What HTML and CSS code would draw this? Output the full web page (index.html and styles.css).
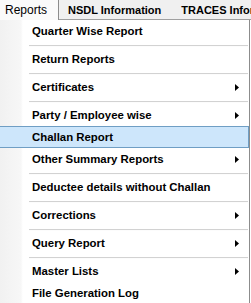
FILE: index.html
```html
<!DOCTYPE html>
<html>
<head>
<meta charset="utf-8">
<link rel="stylesheet" href="styles.css">
</head>
<body>
<div class="menubar">
  <div class="tab open">Reports</div>
  <div class="rest">
    <div class="tab first">NSDL Information</div>
    <div class="tab">TRACES Information</div>
  </div>
</div>
<div class="dropdown">
  <div class="item">Quarter Wise Report</div>
  <div class="sep"></div>
  <div class="item">Return Reports</div>
  <div class="sep"></div>
  <div class="item">Certificates<span class="arrow"><svg width="4" height="7" viewBox="0 0 4 7"><polygon points="0,0 4,3.5 0,7" fill="#000"/></svg></span></div>
  <div class="sep"></div>
  <div class="item">Party / Employee wise<span class="arrow"><svg width="4" height="7" viewBox="0 0 4 7"><polygon points="0,0 4,3.5 0,7" fill="#000"/></svg></span></div>
  <div class="item active">Challan Report</div>
  <div class="item">Other Summary Reports<span class="arrow"><svg width="4" height="7" viewBox="0 0 4 7"><polygon points="0,0 4,3.5 0,7" fill="#000"/></svg></span></div>
  <div class="sep"></div>
  <div class="item">Deductee details without Challan</div>
  <div class="sep"></div>
  <div class="item">Corrections<span class="arrow"><svg width="4" height="7" viewBox="0 0 4 7"><polygon points="0,0 4,3.5 0,7" fill="#000"/></svg></span></div>
  <div class="sep"></div>
  <div class="item">Query Report<span class="arrow"><svg width="4" height="7" viewBox="0 0 4 7"><polygon points="0,0 4,3.5 0,7" fill="#000"/></svg></span></div>
  <div class="sep"></div>
  <div class="item">Master Lists<span class="arrow"><svg width="4" height="7" viewBox="0 0 4 7"><polygon points="0,0 4,3.5 0,7" fill="#000"/></svg></span></div>
  <div class="item">File Generation Log</div>
</div>
</body>
</html>
```

FILE: styles.css
```css
html, body {
  margin: 0;
  padding: 0;
  background: #ffffff;
  overflow: hidden;
}
body {
  width: 251px;
  height: 303px;
  font-family: "Liberation Sans", Arial, sans-serif;
  font-size: 11.4px;
  font-weight: bold;
  color: #000;
}
.menubar {
  display: flex;
  height: 20px;
  background: #f0f0f0;
  font-size: 11px;
}
.tab {
  display: flex;
  align-items: center;
  padding: 0 10px;
  white-space: nowrap;
}
.tab.open {
  box-sizing: border-box;
  padding: 0 0 0 5px;
  height: 20px;
  width: 59px;
  background: #fafafa;
  border-right: 1px solid #8c8c8c;
  font-size: 12px;
  font-weight: normal;
}
.rest {
  flex: 1;
  display: flex;
  height: 19px;
  border-bottom: 1px solid #a0a0a0;
  overflow: hidden;
}
.tab.first {
  padding-left: 9px;
}
.dropdown {
  width: 249px;
  border-right: 1px solid #8c8c8c;
  background: linear-gradient(to right, #f1f1f1 0, #f7f7f7 21px, #fcfcfc 22px, #ffffff 23px);
}
.item {
  display: flex;
  align-items: center;
  height: 22px;
  box-sizing: border-box;
  padding-left: 32px;
  padding-right: 10px;
  white-space: nowrap;
}
.item.active {
  background: #cde6fb;
  border: 1px solid #6f9ec4;
  border-left: none;
  padding-left: 32px;
  padding-right: 9px;
}
.arrow {
  margin-left: auto;
  display: flex;
  align-items: center;
}
.sep {
  height: 6px;
  margin-left: 29px;
  margin-right: 1px;
  box-sizing: border-box;
  padding-top: 3px;
}
.sep::before {
  content: "";
  display: block;
  height: 1px;
  background: #d2d2d2;
  border-bottom: 1px solid #fcfcfc;
}
```
